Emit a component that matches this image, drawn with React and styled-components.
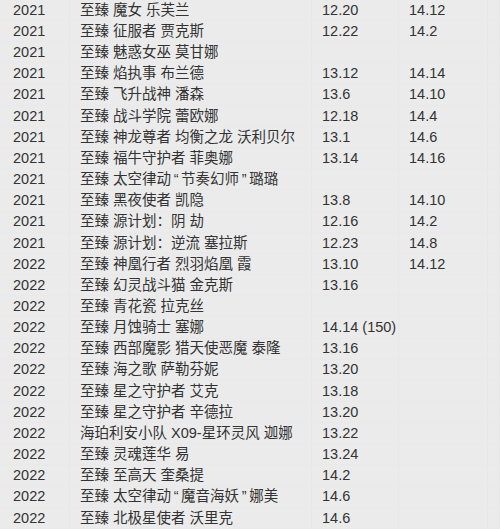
import React from "react";
import styled, { createGlobalStyle } from "styled-components";

const Global = createGlobalStyle`
  html, body {
    margin: 0;
    padding: 0;
    background: #ebebeb;
  }
`;

const Table = styled.div`
  width: 500px;
  height: 529px;
  overflow: hidden;
  background: #ebebeb;
  display: grid;
  grid-template-columns: 70px 242px 87px 89px 1fr;
  grid-auto-rows: 21.16px;
  font-family: "Liberation Sans", "Noto Sans CJK SC", sans-serif;
  font-size: 14.5px;
  color: #333333;
`;

const Cell = styled.div`
  display: flex;
  align-items: center;
  padding-left: ${(p) => (p.$first ? "13px" : "10px")};
  white-space: nowrap;
  line-height: 1;
  border-right: 1px solid #e7e7e7;
  border-bottom: 1px solid #e9e9e9;
  overflow: visible;
  position: relative;
  z-index: ${(p) => (p.$wide ? 1 : 0)};
`;

const Quote = styled.span`
  padding: 0 0.18em;
`;

const rows = [
  ["2021", "至臻 魔女 乐芙兰", "12.20", "14.12"],
  ["2021", "至臻 征服者 贾克斯", "12.22", "14.2"],
  ["2021", "至臻 魅惑女巫 莫甘娜", "", ""],
  ["2021", "至臻 焰执事 布兰德", "13.12", "14.14"],
  ["2021", "至臻 飞升战神 潘森", "13.6", "14.10"],
  ["2021", "至臻 战斗学院 蕾欧娜", "12.18", "14.4"],
  ["2021", "至臻 神龙尊者 均衡之龙 沃利贝尔", "13.1", "14.6"],
  ["2021", "至臻 福牛守护者 菲奥娜", "13.14", "14.16"],
  ["2021", "至臻 太空律动“节奏幻师”璐璐", "", ""],
  ["2021", "至臻 黑夜使者 凯隐", "13.8", "14.10"],
  ["2021", "至臻 源计划：阴 劫", "12.16", "14.2"],
  ["2021", "至臻 源计划：逆流 塞拉斯", "12.23", "14.8"],
  ["2022", "至臻 神凰行者 烈羽焰凰 霞", "13.10", "14.12"],
  ["2022", "至臻 幻灵战斗猫 金克斯", "13.16", ""],
  ["2022", "至臻 青花瓷 拉克丝", "", ""],
  ["2022", "至臻 月蚀骑士 塞娜", "14.14 (150)", ""],
  ["2022", "至臻 西部魔影 猎天使恶魔 泰隆", "13.16", ""],
  ["2022", "至臻 海之歌 萨勒芬妮", "13.20", ""],
  ["2022", "至臻 星之守护者 艾克", "13.18", ""],
  ["2022", "至臻 星之守护者 辛德拉", "13.20", ""],
  ["2022", "海珀利安小队 X09-星环灵风 迦娜", "13.22", ""],
  ["2022", "至臻 灵魂莲华 易", "13.24", ""],
  ["2022", "至臻 至高天 奎桑提", "14.2", ""],
  ["2022", "至臻 太空律动“魔音海妖”娜美", "14.6", ""],
  ["2022", "至臻 北极星使者 沃里克", "14.6", ""],
];

// give the curly quotes a little air, as in the source
function Name({ text }) {
  const parts = text.split(/([“”])/);
  return parts.map((p, i) =>
    p === "“" || p === "”" ? (
      <Quote key={i}>{p}</Quote>
    ) : (
      <React.Fragment key={i}>{p}</React.Fragment>
    )
  );
}

export default function App() {
  return (
    <>
      <Global />
      <Table>
        {rows.map(([year, name, a, b], i) => (
          <React.Fragment key={i}>
            <Cell $first>{year}</Cell>
            <Cell $wide>
              <Name text={name} />
            </Cell>
            <Cell>{a}</Cell>
            <Cell>{b}</Cell>
            <Cell />
          </React.Fragment>
        ))}
      </Table>
    </>
  );
}
